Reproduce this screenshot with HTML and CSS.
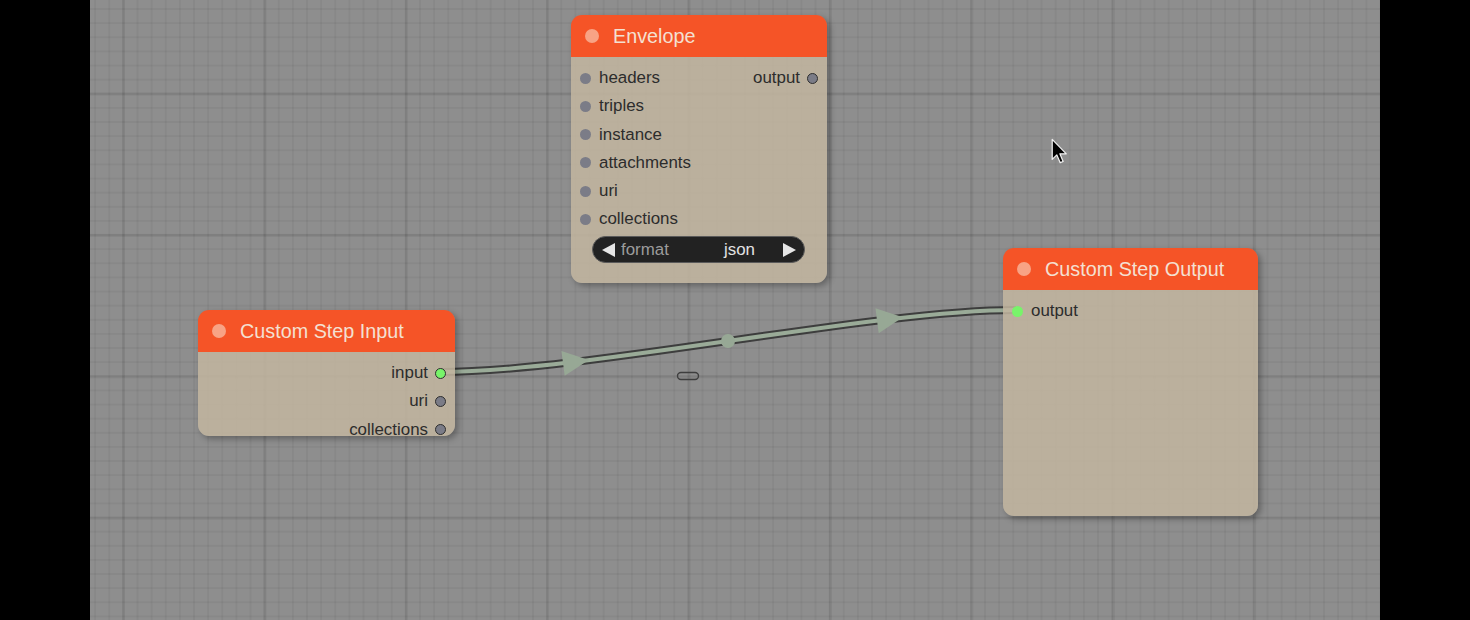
FILE: index.html
```html
<!DOCTYPE html>
<html lang="en">
<head>
<meta charset="utf-8">
<title>Graph editor</title>
<link rel="stylesheet" href="styles.css">
</head>
<body>
<div class="stage">
  <div class="canvas">
    <svg class="links" viewBox="90 0 1290 620" width="1290" height="620">
      <path class="link-border" d="M440,372 C585,372 871,310 1016,310"/>
      <path class="link-line" d="M440,372 C585,372 871,310 1016,310"/>
      <polygon class="link-arrow" points="-8,-12.5 18,0 -8,12.5" transform="translate(571,362.3) rotate(-7.5)"/>
      <polygon class="link-arrow" points="-8,-12.5 18,0 -8,12.5" transform="translate(885,319.7) rotate(-7.5)"/>
      <circle class="link-center" cx="728" cy="341" r="7"/>
      <rect class="link-pill" x="677.5" y="372.5" width="21" height="7" rx="3.5"/>
    </svg>

    <div class="node node-envelope">
      <div class="node-title"><span class="title-dot"></span><span class="title-text">Envelope</span></div>
      <div class="node-body">
        <div class="slot-row">
          <div class="slot slot-in"><i class="pin"></i><span>headers</span></div>
          <div class="slot slot-out"><span>output</span><i class="pin pin-ring"></i></div>
        </div>
        <div class="slot-row"><div class="slot slot-in"><i class="pin"></i><span>triples</span></div></div>
        <div class="slot-row"><div class="slot slot-in"><i class="pin"></i><span>instance</span></div></div>
        <div class="slot-row"><div class="slot slot-in"><i class="pin"></i><span>attachments</span></div></div>
        <div class="slot-row"><div class="slot slot-in"><i class="pin"></i><span>uri</span></div></div>
        <div class="slot-row"><div class="slot slot-in"><i class="pin"></i><span>collections</span></div></div>
        <div class="widget">
          <svg class="widget-arrow" viewBox="0 0 13 14" width="13" height="14"><polygon points="13,0 13,14 0,7"/></svg>
          <span class="widget-label">format</span>
          <span class="widget-value">json</span>
          <svg class="widget-arrow" viewBox="0 0 13 14" width="13" height="14"><polygon points="0,0 13,7 0,14"/></svg>
        </div>
      </div>
    </div>

    <div class="node node-input">
      <div class="node-title"><span class="title-dot"></span><span class="title-text">Custom Step Input</span></div>
      <div class="node-body">
        <div class="slot-row row-end"><div class="slot slot-out"><span>input</span><i class="pin pin-ring pin-on"></i></div></div>
        <div class="slot-row row-end"><div class="slot slot-out"><span>uri</span><i class="pin pin-ring"></i></div></div>
        <div class="slot-row row-end"><div class="slot slot-out"><span>collections</span><i class="pin pin-ring"></i></div></div>
      </div>
    </div>

    <div class="node node-output">
      <div class="node-title"><span class="title-dot"></span><span class="title-text">Custom Step Output</span></div>
      <div class="node-body">
        <div class="slot-row"><div class="slot slot-in"><i class="pin pin-on"></i><span>output</span></div></div>
      </div>
    </div>

    <svg class="cursor" viewBox="0 0 14 22" width="17" height="27">
      <path d="M1,1 L1,17.5 L4.8,13.8 L7.6,20.2 L10,19.2 L7.3,12.9 L12.6,12.9 Z"/>
    </svg>
  </div>
</div>
</body>
</html>
```

FILE: styles.css
```css
html, body {
  margin: 0;
  padding: 0;
  background: #000;
}

body {
  width: 1470px;
  height: 620px;
  overflow: hidden;
  font-family: "Liberation Sans", Arial, sans-serif;
}

.stage {
  display: flex;
  justify-content: center;
  height: 620px;
}

.canvas {
  position: relative;
  width: 1290px;
  height: 620px;
  overflow: hidden;
  background-color: #8e8e8e;
  background-image:
    linear-gradient(to right, rgba(0, 0, 0, 0.065) 0 3px, transparent 3px),
    linear-gradient(to bottom, rgba(0, 0, 0, 0.065) 0 3px, transparent 3px),
    linear-gradient(to right, rgba(0, 0, 0, 0.045) 0 2px, transparent 2px),
    linear-gradient(to bottom, rgba(0, 0, 0, 0.045) 0 2px, transparent 2px);
  background-size: 141.4px 141.4px, 141.4px 141.4px, 14.14px 14.14px, 14.14px 14.14px;
  background-position: 32px 0, 0 92.5px, 4.2px 0, 0 8.1px;
}

/* links layer */
.links {
  position: absolute;
  left: 0;
  top: 0;
}

.link-border {
  fill: none;
  stroke: rgba(35, 35, 35, 0.75);
  stroke-width: 8;
}

.link-line {
  fill: none;
  stroke: #9aab98;
  stroke-width: 4;
}

.link-arrow,
.link-center {
  fill: #97a895;
}

.link-pill {
  fill: none;
  stroke: #3e3e3e;
  stroke-width: 1.4;
}

/* nodes */
.node {
  position: absolute;
  display: flex;
  flex-direction: column;
  border-radius: 11px;
  box-shadow: 3px 3px 6px rgba(0, 0, 0, 0.3);
}

.node-envelope {
  left: 481px;
  top: 15px;
  width: 256px;
  height: 268px;
}

.node-input {
  left: 108px;
  top: 310px;
  width: 257px;
  height: 126px;
}

.node-output {
  left: 913px;
  top: 248px;
  width: 255px;
  height: 268px;
}

.node-title {
  flex: 0 0 42px;
  display: flex;
  align-items: center;
  background: #f55427;
  border-radius: 11px 11px 0 0;
  padding-left: 14px;
  gap: 14px;
}

.title-dot {
  width: 14px;
  height: 14px;
  border-radius: 50%;
  background: #f8a385;
}

.title-text {
  color: #f4e0d2;
  font-size: 19.8px;
  line-height: 22px;
  white-space: nowrap;
}

.node-body {
  flex: 1 1 0;
  min-height: 0;
  display: flex;
  flex-direction: column;
  padding-top: 7px;
  background: rgba(194, 182, 160, 0.86);
  border-radius: 0 0 11px 11px;
}

.slot-row {
  flex: 0 0 28.28px;
  display: flex;
  align-items: center;
  justify-content: space-between;
}

.row-end {
  justify-content: flex-end;
}

.slot {
  display: flex;
  align-items: center;
  font-size: 16.9px;
  color: #2c2c2c;
  white-space: nowrap;
}

.slot-in {
  padding-left: 8.5px;
  gap: 8.5px;
}

.slot-out {
  padding-right: 9px;
  gap: 7px;
}

.pin {
  display: block;
  width: 11px;
  height: 11px;
  border-radius: 50%;
  background: #7b7c87;
}

.pin-ring {
  width: 9px;
  height: 9px;
  border: 1.6px solid #2e2e2e;
}

.pin-on {
  background: #78f46a;
}

/* combo widget */
.widget {
  flex: 0 0 auto;
  display: flex;
  align-items: center;
  height: 25px;
  margin: 2.5px 22px 0 21px;
  padding: 0 8px 0 9px;
  background: #222;
  border: 1px solid #5a5a5a;
  border-radius: 14px;
  font-size: 16.9px;
}

.widget-arrow {
  flex: 0 0 auto;
  fill: #e6e6e6;
}

.widget-label {
  margin-left: 6px;
  color: #9c9c9c;
  flex: 1;
}

.widget-value {
  color: #e2e2e2;
  margin-right: 28px;
}

/* mouse pointer */
.cursor {
  position: absolute;
  left: 961px;
  top: 138px;
  fill: #000;
  stroke: #f2f2f2;
  stroke-width: 1;
  stroke-linejoin: round;
}
```
